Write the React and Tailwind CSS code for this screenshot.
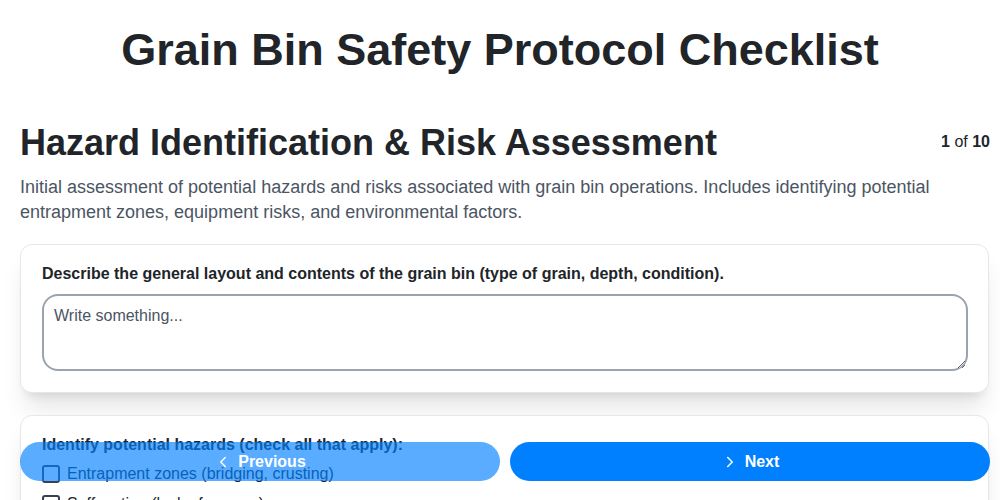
import React, { useState } from 'react';
import { ChevronLeft, ChevronRight } from 'lucide-react';

const hazards = [
  'Entrapment zones (bridging, crusting)',
  'Suffocation (lack of oxygen)',
  'Engulfment in flowing grain',
  'Moving augers and machinery',
];

export default function App() {
  const [notes, setNotes] = useState('');
  const [checked, setChecked] = useState({});

  return (
    <div className="min-h-screen bg-white text-[#212529] font-['Liberation_Sans',Arial,sans-serif]">
      <h1 className="pt-[24px] text-center text-[45px] leading-[52px] font-bold text-[#212529]">
        Grain Bin Safety Protocol Checklist
      </h1>

      <div className="pl-5 pr-[10px] pt-[45px] pb-24">
        <div className="flex items-start justify-between">
          <h2 className="text-[36px] leading-[44px] font-bold">Hazard Identification &amp; Risk Assessment</h2>
          <div className="pt-[9px] text-[16px]">
            <span className="font-bold">1</span> of <span className="font-bold">10</span>
          </div>
        </div>
        <p className="mt-[10px] pr-[50px] text-[18px] leading-[25px] text-[#4b5563]">
          Initial assessment of potential hazards and risks associated with grain bin operations. Includes identifying potential entrapment zones, equipment risks, and environmental factors.
        </p>

        {/* Question 1 */}
        <div className="mt-[19px] mr-[1px] rounded-xl border border-[#e5e7eb] bg-white pl-[21px] pr-[20px] pt-[19px] pb-[21px] shadow-xl">
          <label className="block text-[16px] font-bold leading-5">
            Describe the general layout and contents of the grain bin (type of grain, depth, condition).
          </label>
          <textarea
            value={notes}
            onChange={(e) => setNotes(e.target.value)}
            placeholder="Write something..."
            className="mt-[10px] block h-[77px] w-full rounded-2xl border-2 border-[#9ca3af] px-[10px] py-[8px] text-[16px] placeholder:text-[#4b5563] outline-none"
          />
        </div>

        {/* Question 2 */}
        <div className="mt-[22px] mr-[1px] rounded-xl border border-[#e5e7eb] bg-white pl-[21px] pr-[20px] py-[19px] shadow-xl">
          <label className="block text-[16px] font-bold leading-5">
            Identify potential hazards (check all that apply):
          </label>
          <div className="mt-[9px] flex flex-col gap-[10px]">
            {hazards.map((h) => (
              <label key={h} className="flex items-center gap-[7px] text-[16px] leading-5 cursor-pointer">
                <input
                  type="checkbox"
                  checked={!!checked[h]}
                  onChange={() => setChecked({ ...checked, [h]: !checked[h] })}
                  className="h-[18px] w-[18px] appearance-none rounded-[3px] border-2 border-[#374151]"
                />
                <span>{h}</span>
              </label>
            ))}
          </div>
        </div>
      </div>

      {/* Navigation */}
      <div className="fixed bottom-[19px] left-5 right-[10px] flex gap-[10px]">
        <button className="flex h-[39px] flex-1 items-center justify-center gap-[6px] rounded-full bg-[#0080ff] opacity-65 text-[16px] font-bold text-white">
          <ChevronLeft size={18} strokeWidth={2} />
          Previous
        </button>
        <button className="flex h-[39px] flex-1 items-center justify-center gap-[6px] rounded-full bg-[#0080ff] text-[16px] font-bold text-white">
          <ChevronRight size={18} strokeWidth={2} />
          Next
        </button>
      </div>
    </div>
  );
}
